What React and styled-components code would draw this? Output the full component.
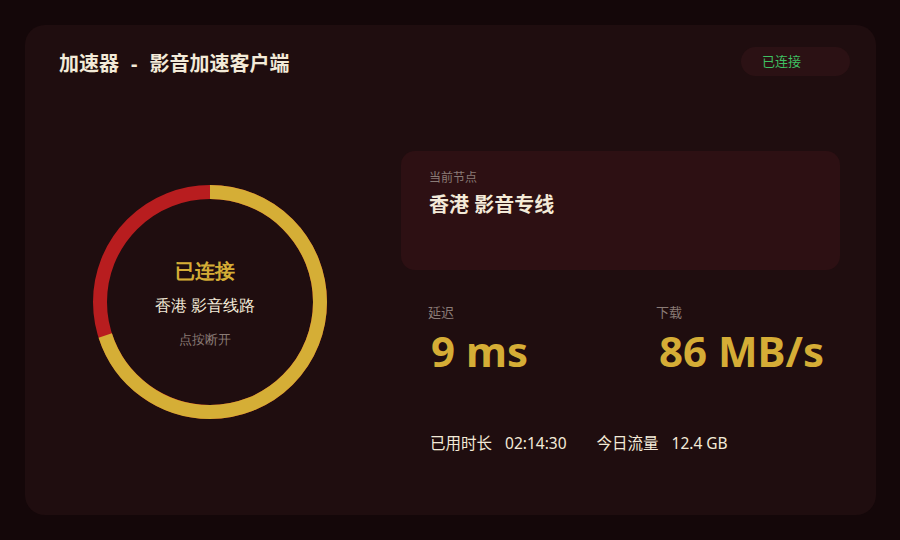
import React from "react";
import styled, { createGlobalStyle } from "styled-components";

const GlobalStyle = createGlobalStyle`
  html, body {
    margin: 0;
    background: #140709;
  }
  body {
    padding: 25px;
    font-family: "Noto Sans", "Noto Sans CJK SC", sans-serif;
  }
`;

const Card = styled.div`
  width: 851px;
  height: 490px;
  box-sizing: border-box;
  background: #1f0d0f;
  border-radius: 20px;
  display: flex;
  flex-direction: column;
`;

const Header = styled.header`
  display: flex;
  justify-content: space-between;
  align-items: flex-start;
  padding: 22px 26px 0 34px;
`;

const Title = styled.h1`
  margin: 3px 0 0;
  font-size: 20px;
  line-height: 28px;
  font-weight: 700;
  color: #f3ead8;
  span {
    margin: 0 12px;
  }
`;

const Badge = styled.div`
  width: 109px;
  height: 29px;
  box-sizing: border-box;
  padding-left: 21px;
  border-radius: 15px;
  background: #2b1114;
  color: #3fc062;
  font-size: 13px;
  line-height: 29px;
`;

const Body = styled.main`
  flex: 1;
  display: flex;
  align-items: center;
  gap: 74px;
  padding: 10px 0 0 68px;
`;

const Dial = styled.button`
  position: relative;
  width: 234px;
  height: 234px;
  padding: 0;
  border: none;
  background: none;
  cursor: pointer;
  svg {
    display: block;
  }
`;

const DialText = styled.div`
  position: absolute;
  inset: 0 10px 0 0;
  display: flex;
  flex-direction: column;
  align-items: center;
  padding-top: 72px;
  font-family: inherit;
`;

const DialState = styled.div`
  font-size: 20px;
  line-height: 28px;
  font-weight: 700;
  color: #d5ad36;
`;

const DialLine = styled.div`
  margin-top: 10px;
  font-size: 16px;
  line-height: 22px;
  color: #f3ead8;
`;

const DialHint = styled.div`
  margin-top: 14px;
  font-size: 13px;
  line-height: 18px;
  color: #8a7b76;
`;

const Side = styled.section`
  width: 439px;
  display: flex;
  flex-direction: column;
  margin-top: 1px;
`;

const NodeCard = styled.div`
  height: 119px;
  box-sizing: border-box;
  padding: 18px 28px;
  border-radius: 14px;
  background: #2d1013;
`;

const Label = styled.div`
  font-size: ${(p) => p.size || 13}px;
  line-height: 17px;
  color: #8a7b76;
`;

const NodeName = styled.div`
  margin-top: 5px;
  font-size: 20px;
  line-height: 28px;
  font-weight: 700;
  color: #f3ead8;
`;

const Stats = styled.div`
  display: grid;
  grid-template-columns: 228px 1fr;
  margin-top: 34px;
  padding-left: 27px;
`;

const Value = styled.div`
  margin-top: 6px;
  padding-left: 3px;
  font-size: 42px;
  line-height: 48px;
  font-weight: 700;
  color: #d5ad36;
`;

const Footer = styled.div`
  display: flex;
  gap: 30px;
  margin-top: 57px;
  padding-left: 29px;
  font-size: 15.5px;
  line-height: 22px;
  color: #f3ead8;
`;

const Pair = styled.div`
  display: flex;
  gap: 13px;
`;

const RING = 110;
const CIRC = 2 * Math.PI * RING;

function Ring({ ratio }) {
  return (
    <svg width="234" height="234" viewBox="0 0 234 234">
      <circle cx="117" cy="117" r={RING} fill="none" stroke="#b81d1f" strokeWidth="14" />
      <circle
        cx="117"
        cy="117"
        r={RING}
        fill="none"
        stroke="#d5ae36"
        strokeWidth="14"
        strokeDasharray={`${CIRC * ratio} ${CIRC}`}
        transform="rotate(-90 117 117)"
      />
    </svg>
  );
}

export default function App() {
  return (
    <>
      <GlobalStyle />
      <Card>
        <Header>
          <Title>
            加速器<span>-</span>影音加速客户端
          </Title>
          <Badge>已连接</Badge>
        </Header>
        <Body>
          <Dial>
            <Ring ratio={0.7} />
            <DialText>
              <DialState>已连接</DialState>
              <DialLine>香港 影音线路</DialLine>
              <DialHint>点按断开</DialHint>
            </DialText>
          </Dial>
          <Side>
            <NodeCard>
              <Label size={12}>当前节点</Label>
              <NodeName>香港 影音专线</NodeName>
            </NodeCard>
            <Stats>
              <div>
                <Label>延迟</Label>
                <Value>9 ms</Value>
              </div>
              <div>
                <Label>下载</Label>
                <Value>86 MB/s</Value>
              </div>
            </Stats>
            <Footer>
              <Pair>
                <span>已用时长</span>
                <span>02:14:30</span>
              </Pair>
              <Pair>
                <span>今日流量</span>
                <span>12.4 GB</span>
              </Pair>
            </Footer>
          </Side>
        </Body>
      </Card>
    </>
  );
}
